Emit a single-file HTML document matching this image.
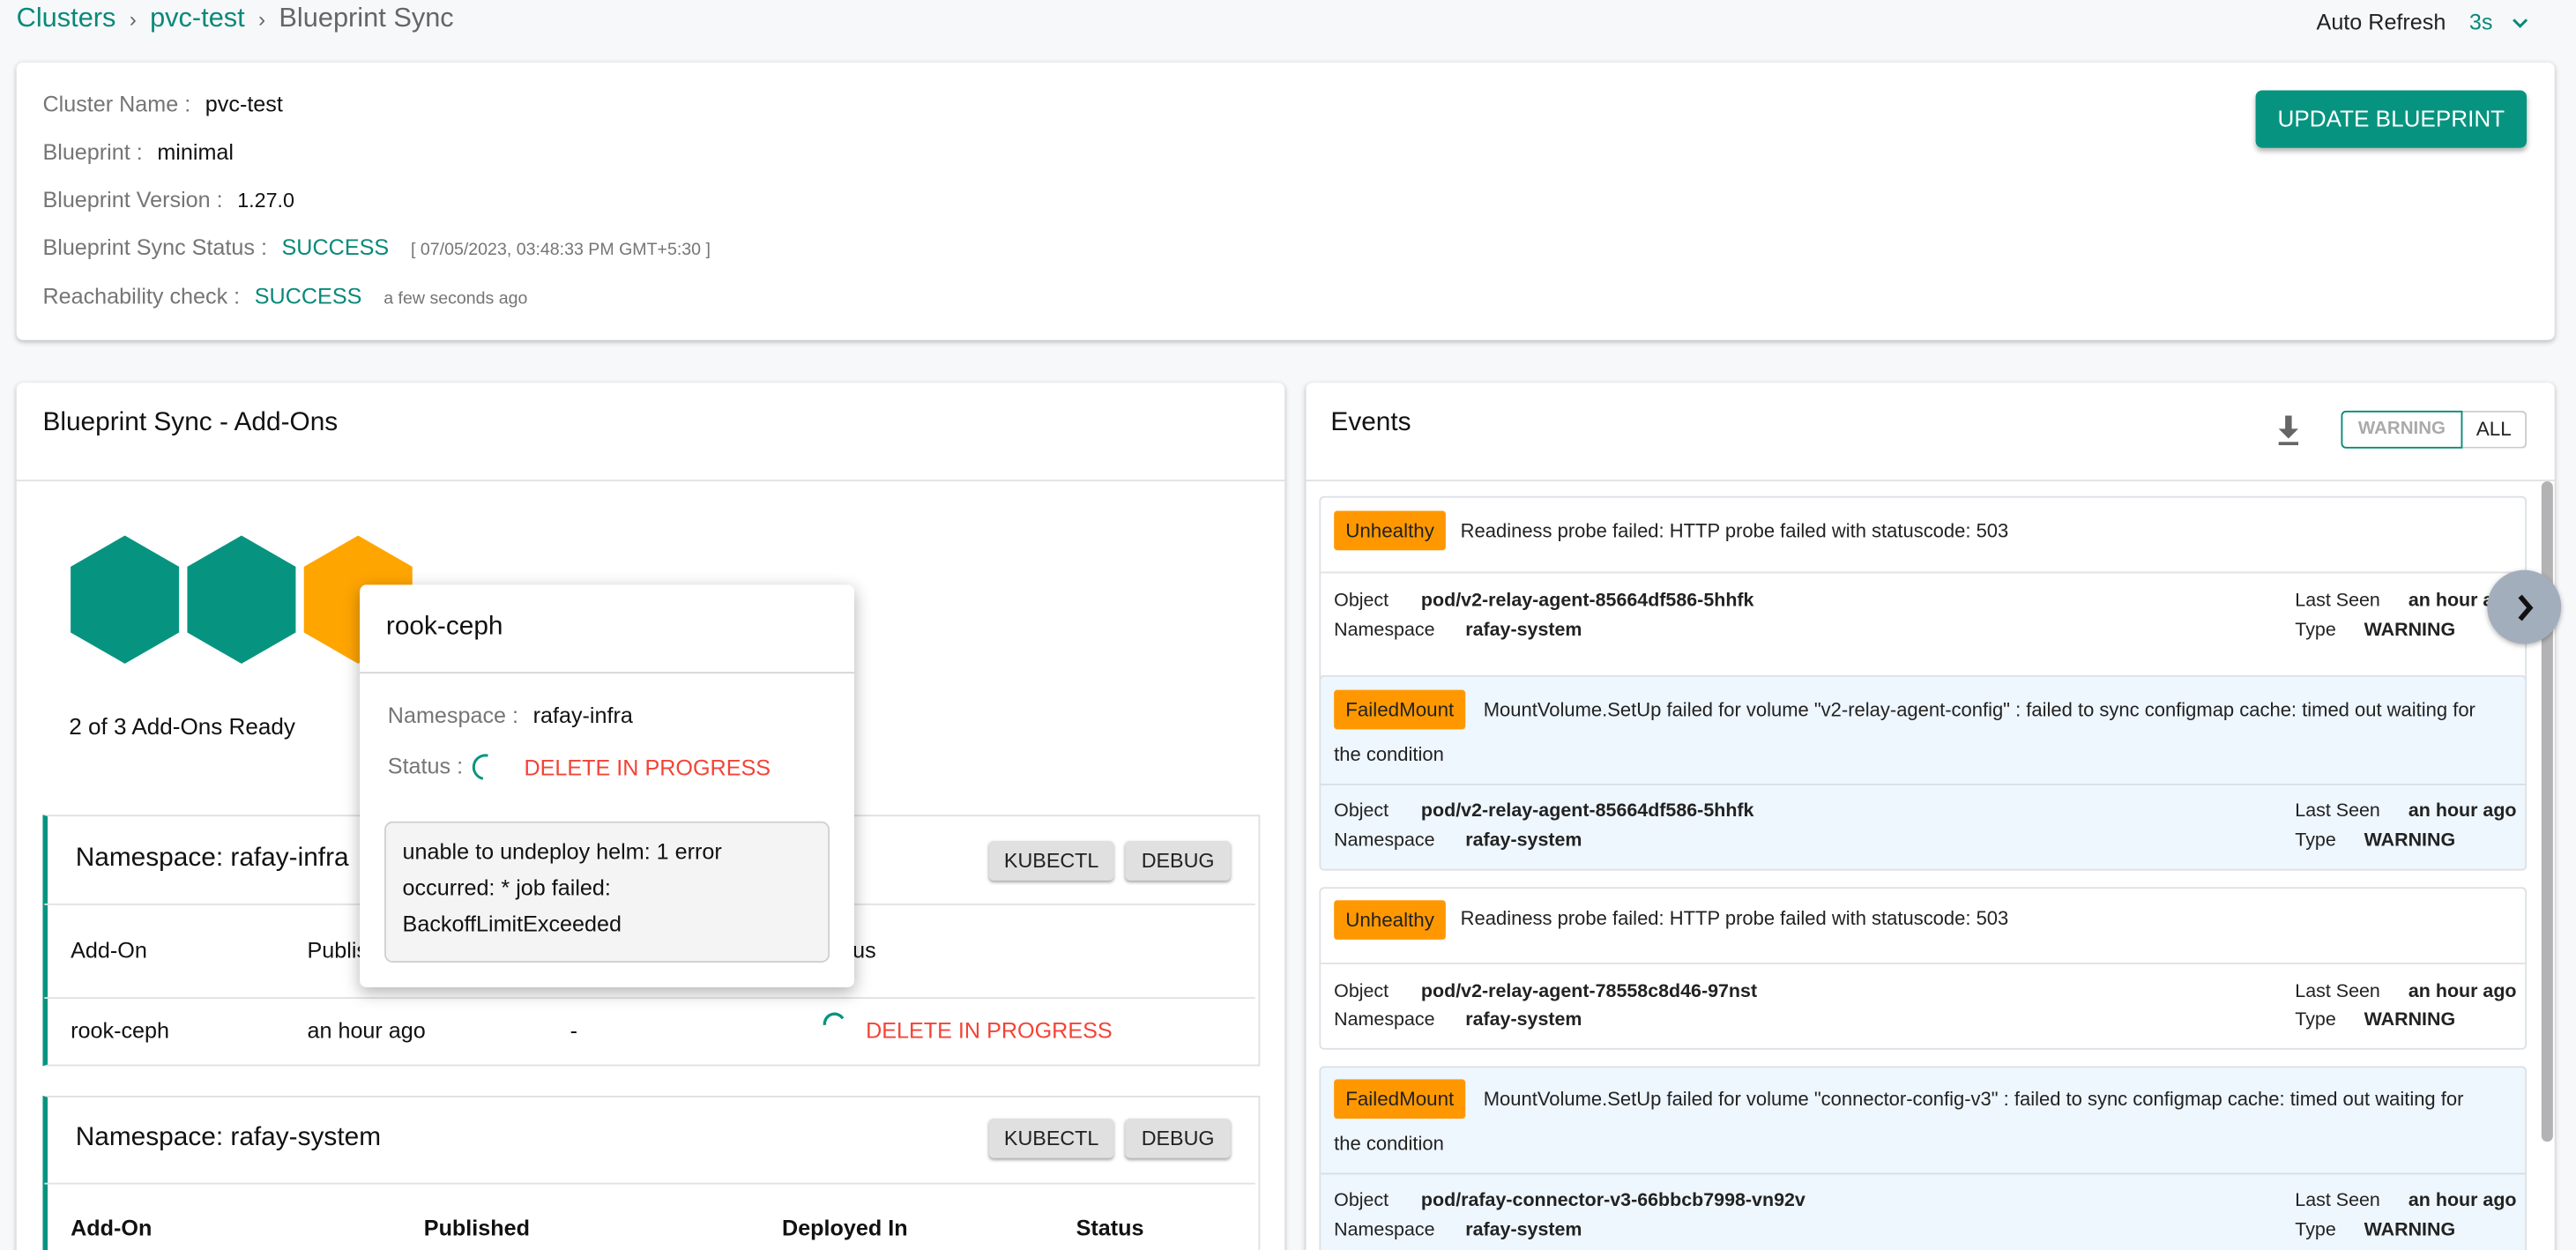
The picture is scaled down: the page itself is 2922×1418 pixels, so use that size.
<!DOCTYPE html>
<html><head><meta charset="utf-8">
<style>
html,body{margin:0;padding:0;width:2922px;height:1418px;overflow:hidden;background:#f7f8fa;}
#s{position:absolute;left:0;top:0;width:1568px;height:761px;overflow:hidden;transform:scale(1.8635);transform-origin:0 0;font-family:"Liberation Sans",Arial,sans-serif;color:#222;}
.a{position:absolute;white-space:nowrap;line-height:20px;}
.card{position:absolute;background:#fff;border-radius:4px;box-shadow:0 1px 3px rgba(0,0,0,.25);}
.lab{color:#757575;font-size:13.5px;}
.val{color:#111;font-size:13.5px;}
.teal{color:#08897a;}
.red{color:#f44336;}
.hl{position:absolute;height:1px;background:#e2e2e2;}
.btn{position:absolute;background:#e0e0e0;border-radius:3px;box-shadow:0 1px 2px rgba(0,0,0,.35);font-size:12.5px;text-align:center;line-height:24px;height:24px;color:#222;}
.ev{position:absolute;left:803px;width:733px;border:1px solid #dde1e6;border-radius:3px;}
.badge{position:absolute;left:8px;height:24px;line-height:24px;background:#ff9800;font-size:12px;padding:0 7px;border-radius:2px;color:#222;}
.et{font-size:11.8px;color:#222;}
.eb{font-size:11.5px;font-weight:bold;color:#222;}
.el{font-size:11.5px;color:#222;}
</style></head><body>
<div id="s">
<div class="a" style="left:10px;top:1px;font-size:16.5px;"><span class="teal">Clusters</span> <span style="color:#666;font-size:13px">&nbsp;›&nbsp;</span> <span class="teal">pvc-test</span> <span style="color:#666;font-size:13px">&nbsp;›&nbsp;</span> <span style="color:#666">Blueprint Sync</span></div>
<div class="a" style="left:1410px;top:4px;font-size:13.5px;color:#222">Auto Refresh</div>
<div class="a teal" style="left:1503px;top:4px;font-size:13.5px;">3s</div>
<svg style="position:absolute;left:1529px;top:10px" width="10" height="8"><path d="M1 2 L5 6 L9 2" stroke="#08897a" stroke-width="1.6" fill="none"/></svg>

<div class="card" style="left:10px;top:38px;width:1545px;height:169px;"></div>
<div class="a" style="left:26px;top:54px"><span class="lab">Cluster Name :</span>&nbsp; <span class="val">pvc-test</span></div>
<div class="a" style="left:26px;top:83px"><span class="lab">Blueprint :</span>&nbsp; <span class="val">minimal</span></div>
<div class="a" style="left:26px;top:112px"><span class="lab">Blueprint Version :</span>&nbsp; <span class="val" style="font-size:12.5px">1.27.0</span></div>
<div class="a" style="left:26px;top:141px"><span class="lab">Blueprint Sync Status :</span>&nbsp; <span class="teal" style="font-size:13.5px">SUCCESS</span> &nbsp;&nbsp;<span style="color:#757575;font-size:10.5px">[ 07/05/2023, 03:48:33 PM GMT+5:30 ]</span></div>
<div class="a" style="left:26px;top:171px"><span class="lab">Reachability check :</span>&nbsp; <span class="teal" style="font-size:13.5px">SUCCESS</span> &nbsp;&nbsp;<span style="color:#757575;font-size:10.5px">a few seconds ago</span></div>
<div style="position:absolute;left:1373px;top:55px;width:165px;height:35px;background:#069480;border-radius:4px;box-shadow:0 2px 3px rgba(0,0,0,.3);color:#fff;font-size:14px;text-align:center;line-height:35px;">UPDATE BLUEPRINT</div>

<div class="card" style="left:10px;top:233px;width:772px;height:600px;"></div>
<div class="a" style="left:26px;top:248px;font-size:16px;color:#111">Blueprint Sync - Add-Ons</div>
<div class="hl" style="left:10px;top:292px;width:772px"></div>
<svg style="position:absolute;left:42px;top:325px" width="215" height="81">
<polygon points="34,1 67,20 67,60 34,79 1,60 1,20" fill="#069480"/>
<polygon points="105,1 138,20 138,60 105,79 72,60 72,20" fill="#069480"/>
<polygon points="176,1 209,20 209,60 176,79 143,60 143,20" fill="#ffa500"/>
</svg>
<div class="a" style="left:42px;top:432px;font-size:14px;color:#111">2 of 3 Add-Ons Ready</div>

<div style="position:absolute;left:26px;top:496px;width:737px;height:151px;border:1px solid #e0e0e0;border-left:3px solid #069480;background:#fff"></div>
<div class="a" style="left:46px;top:513px;font-size:16px;color:#111">Namespace: rafay-infra</div>
<div class="btn" style="left:602px;top:512px;width:76px">KUBECTL</div>
<div class="btn" style="left:685px;top:512px;width:64px">DEBUG</div>
<div class="hl" style="left:27px;top:550px;width:737px"></div>
<div class="a" style="left:43px;top:569px;font-size:13.5px;color:#111">Add-On</div>
<div class="a" style="left:187px;top:569px;font-size:13.5px;color:#111">Published</div>
<div class="a" style="left:495px;top:569px;font-size:13.5px;color:#111">Status</div>
<div class="hl" style="left:27px;top:607px;width:737px"></div>
<div class="a" style="left:43px;top:618px;font-size:13.5px;color:#111">rook-ceph</div>
<div class="a" style="left:187px;top:618px;font-size:13.5px;color:#111">an hour ago</div>
<div class="a" style="left:347px;top:618px;font-size:13.5px;color:#111">-</div>
<svg style="position:absolute;left:499px;top:615px" width="18" height="18"><path d="M3 9 A6 6 0 0 1 14 5" stroke="#069480" stroke-width="1.8" fill="none"/></svg>
<div class="a red" style="left:527px;top:618px;font-size:13.5px;">DELETE IN PROGRESS</div>

<div style="position:absolute;left:26px;top:667px;width:737px;height:160px;border:1px solid #e0e0e0;border-left:3px solid #069480;background:#fff"></div>
<div class="a" style="left:46px;top:683px;font-size:16px;color:#111">Namespace: rafay-system</div>
<div class="btn" style="left:602px;top:681px;width:76px">KUBECTL</div>
<div class="btn" style="left:685px;top:681px;width:64px">DEBUG</div>
<div class="hl" style="left:27px;top:720px;width:737px"></div>
<div class="a" style="left:43px;top:738px;font-size:13.5px;color:#111;font-weight:bold">Add-On</div>
<div class="a" style="left:258px;top:738px;font-size:13.5px;color:#111;font-weight:bold">Published</div>
<div class="a" style="left:476px;top:738px;font-size:13.5px;color:#111;font-weight:bold">Deployed In</div>
<div class="a" style="left:655px;top:738px;font-size:13.5px;color:#111;font-weight:bold">Status</div>

<div style="position:absolute;left:219px;top:356px;width:301px;height:245px;background:#fff;border-radius:4px;box-shadow:0 3px 10px rgba(0,0,0,.3)"></div>
<div class="a" style="left:235px;top:372px;font-size:16px;color:#111">rook-ceph</div>
<div class="hl" style="left:219px;top:409px;width:301px;background:#d6d6d6"></div>
<div class="a" style="left:236px;top:426px"><span class="lab">Namespace :</span>&nbsp; <span class="val">rafay-infra</span></div>
<div class="a" style="left:236px;top:457px"><span class="lab">Status :</span></div>
<svg style="position:absolute;left:287px;top:457px" width="20" height="20"><path d="M10 3 A7 7 0 0 0 7 17" stroke="#069480" stroke-width="1.6" fill="none"/></svg>
<div class="a red" style="left:319px;top:458px;font-size:13.5px;">DELETE IN PROGRESS</div>
<div style="position:absolute;left:234px;top:500px;width:269px;height:84px;background:#f4f4f4;border:1px solid #d0d0d0;border-radius:5px"></div>
<div style="position:absolute;left:245px;top:508px;font-size:13.5px;line-height:22px;color:#111">unable to undeploy helm: 1 error<br>occurred: * job failed:<br>BackoffLimitExceeded</div>

<div class="card" style="left:795px;top:233px;width:760px;height:600px;"></div>
<div class="a" style="left:810px;top:248px;font-size:16px;color:#111">Events</div>
<svg style="position:absolute;left:1384px;top:252px" width="18" height="20"><path d="M7 1 h4 v8 h4 l-6 6 l-6 -6 h4z" fill="#666"/><rect x="3" y="17" width="12" height="2" fill="#666"/></svg>
<div style="position:absolute;left:1425px;top:250px;width:72px;height:21px;border:1px solid #08897a;border-radius:3px 0 0 3px;color:#aaa;font-size:11px;font-weight:bold;text-align:center;line-height:21px">WARNING</div>
<div style="position:absolute;left:1499px;top:250px;width:38px;height:21px;border:1px solid #ccc;border-left:none;border-radius:0 3px 3px 0;color:#222;font-size:12px;text-align:center;line-height:21px">ALL</div>
<div class="hl" style="left:795px;top:292px;width:760px"></div>
<div style="position:absolute;left:1547px;top:293px;width:7px;height:402px;background:#b3b3b3;border-radius:4px"></div>

<div class="ev" style="top:302px;height:137px;background:#fff"></div>
<div class="badge" style="left:812px;top:311px">Unhealthy</div>
<div class="a et" style="left:889px;top:313px">Readiness probe failed: HTTP probe failed with statuscode: 503</div>
<div class="hl" style="left:804px;top:348px;width:733px"></div>
<div class="a el" style="left:812px;top:356px">Object</div><div class="a eb" style="left:865px;top:356px">pod/v2-relay-agent-85664df586-5hhfk</div>
<div class="a el" style="left:812px;top:374px">Namespace</div><div class="a eb" style="left:892px;top:374px">rafay-system</div>
<div class="a el" style="left:1397px;top:356px">Last Seen</div><div class="a eb" style="left:1466px;top:356px">an hour ago</div>
<div class="a el" style="left:1397px;top:374px">Type</div><div class="a eb" style="left:1439px;top:374px">WARNING</div>

<div class="ev" style="top:411px;height:117px;background:#eef6fe"></div>
<div class="badge" style="left:812px;top:420px">FailedMount</div>
<div class="a et" style="left:903px;top:422px">MountVolume.SetUp failed for volume "v2-relay-agent-config" : failed to sync configmap cache: timed out waiting for</div>
<div class="a et" style="left:812px;top:449px">the condition</div>
<div class="hl" style="left:804px;top:477px;width:733px;background:#d6dde6"></div>
<div class="a el" style="left:812px;top:484px">Object</div><div class="a eb" style="left:865px;top:484px">pod/v2-relay-agent-85664df586-5hhfk</div>
<div class="a el" style="left:812px;top:502px">Namespace</div><div class="a eb" style="left:892px;top:502px">rafay-system</div>
<div class="a el" style="left:1397px;top:484px">Last Seen</div><div class="a eb" style="left:1466px;top:484px">an hour ago</div>
<div class="a el" style="left:1397px;top:502px">Type</div><div class="a eb" style="left:1439px;top:502px">WARNING</div>

<div class="ev" style="top:540px;height:97px;background:#fff"></div>
<div class="badge" style="left:812px;top:548px">Unhealthy</div>
<div class="a et" style="left:889px;top:549px">Readiness probe failed: HTTP probe failed with statuscode: 503</div>
<div class="hl" style="left:804px;top:586px;width:733px"></div>
<div class="a el" style="left:812px;top:594px">Object</div><div class="a eb" style="left:865px;top:594px">pod/v2-relay-agent-78558c8d46-97nst</div>
<div class="a el" style="left:812px;top:611px">Namespace</div><div class="a eb" style="left:892px;top:611px">rafay-system</div>
<div class="a el" style="left:1397px;top:594px">Last Seen</div><div class="a eb" style="left:1466px;top:594px">an hour ago</div>
<div class="a el" style="left:1397px;top:611px">Type</div><div class="a eb" style="left:1439px;top:611px">WARNING</div>

<div class="ev" style="top:649px;height:160px;background:#eef6fe"></div>
<div class="badge" style="left:812px;top:657px">FailedMount</div>
<div class="a et" style="left:903px;top:659px">MountVolume.SetUp failed for volume "connector-config-v3" : failed to sync configmap cache: timed out waiting for</div>
<div class="a et" style="left:812px;top:686px">the condition</div>
<div class="hl" style="left:804px;top:714px;width:733px;background:#d6dde6"></div>
<div class="a el" style="left:812px;top:721px">Object</div><div class="a eb" style="left:865px;top:721px">pod/rafay-connector-v3-66bbcb7998-vn92v</div>
<div class="a el" style="left:812px;top:739px">Namespace</div><div class="a eb" style="left:892px;top:739px">rafay-system</div>
<div class="a el" style="left:1397px;top:721px">Last Seen</div><div class="a eb" style="left:1466px;top:721px">an hour ago</div>
<div class="a el" style="left:1397px;top:739px">Type</div><div class="a eb" style="left:1439px;top:739px">WARNING</div>

<div style="position:absolute;left:1514px;top:347px;width:45px;height:45px;border-radius:50%;background:#a3aebd;box-shadow:0 1px 3px rgba(0,0,0,.3)"></div>
<svg style="position:absolute;left:1529px;top:360px" width="16" height="20"><path d="M5 3 L11 10 L5 17" stroke="#111" stroke-width="3" fill="none"/></svg>
</div>
</body></html>
